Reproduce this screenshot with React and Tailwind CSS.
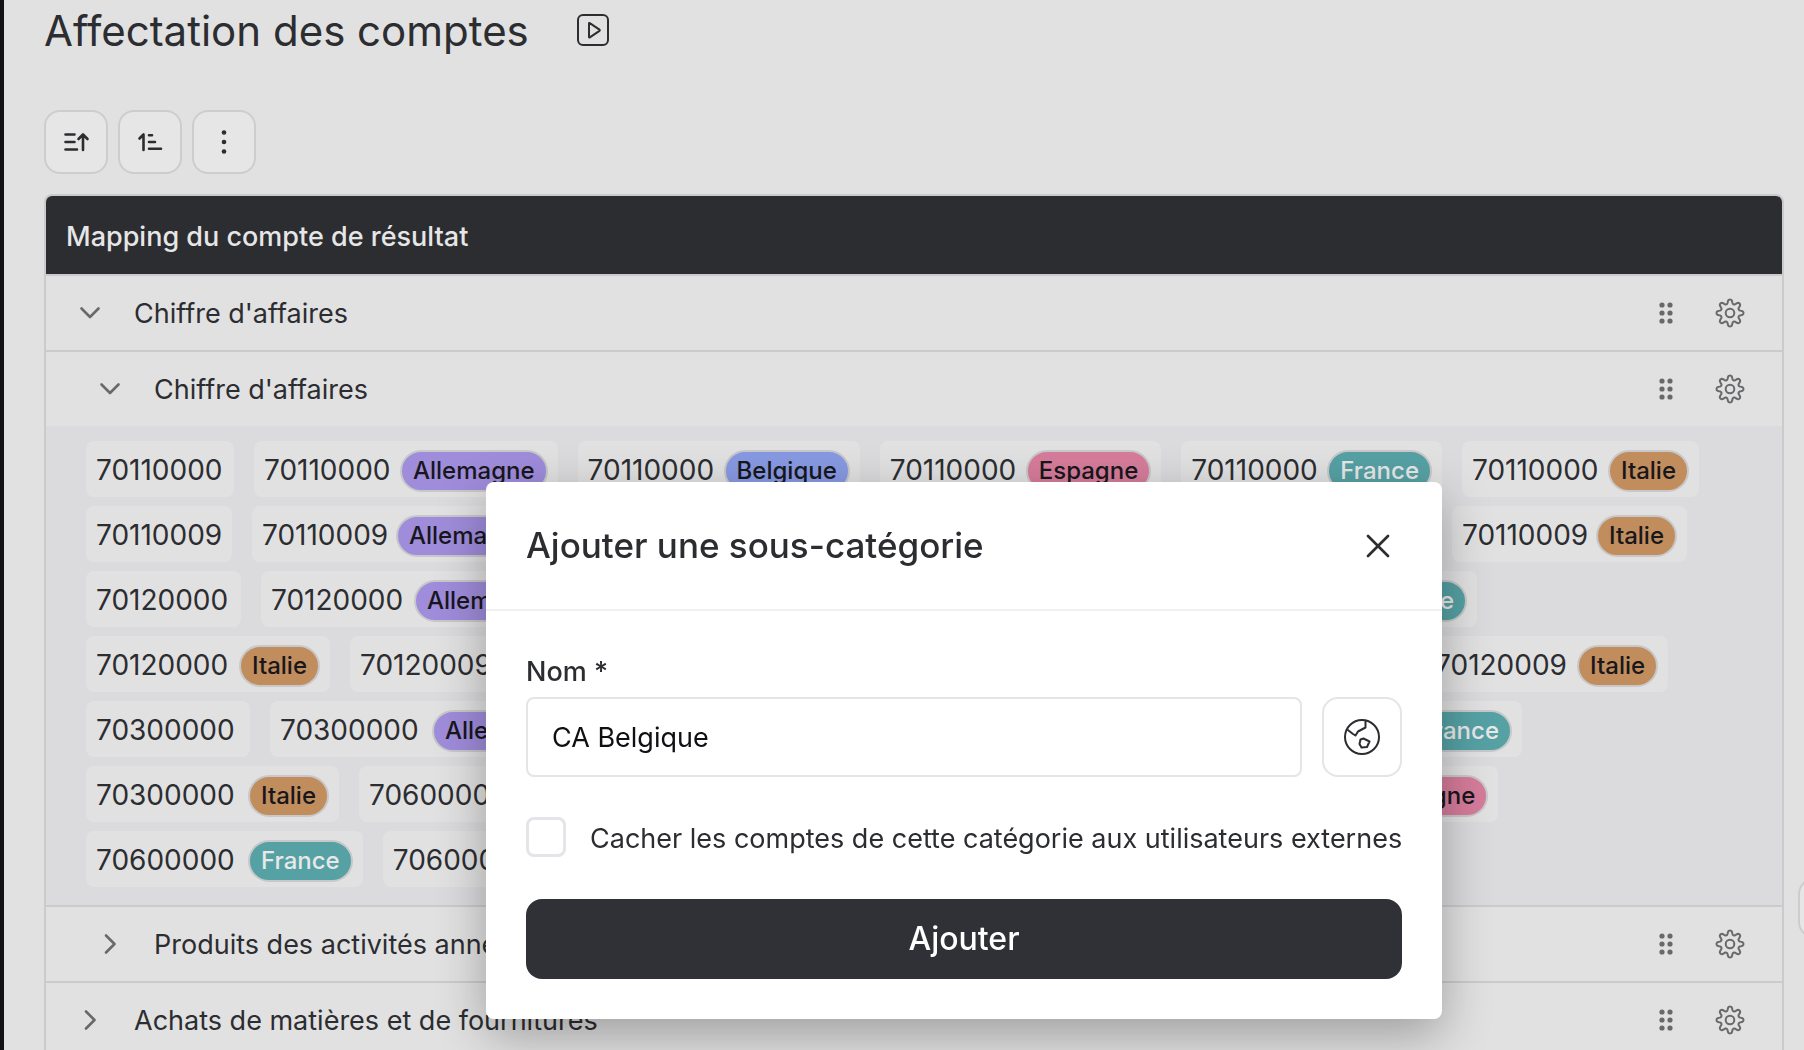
import { useState } from "react";
import clsx from "clsx";
import { X } from "lucide-react";

const TAGS = {
  Allemagne: "bg-[#9f8cdb] text-[#17171c]",
  Belgique: "bg-[#8799e2] text-[#17171c]",
  Espagne: "bg-[#d67c9b] text-[#17171c]",
  France: "bg-[#56a1a4] text-[#e8e8e8]",
  Italie: "bg-[#c28d5d] text-[#17171c]",
};

const CODE_WIDTHS = {
  70110000: "w-[128px]",
  70110009: "w-[126px]",
  70120000: "w-[135px]",
  70120009: "w-[134px]",
  70300000: "w-[144px]",
  70600000: "w-[144px]",
};

const ACCOUNT_ROWS = [
  [["70110000"], ["70110000", "Allemagne"], ["70110000", "Belgique"], ["70110000", "Espagne"], ["70110000", "France"], ["70110000", "Italie"]],
  [["70110009"], ["70110009", "Allemagne"], ["70110009", "Belgique"], ["70110009", "Espagne"], ["70110009", "France"], ["70110009", "Italie"]],
  [["70120000"], ["70120000", "Allemagne"], ["70120000", "Belgique"], ["70120000", "Espagne"], ["70120000", "France"]],
  [["70120000", "Italie"], ["70120009"], ["70120009", "Allemagne"], ["70120009", "Espagne"], ["70120000", "Italie"], ["70120009", "Italie"]],
  [["70300000"], ["70300000", "Allemagne"], ["70300000", "Belgique"], ["70300000", "Espagne"], ["70300000", "France"]],
  [["70300000", "Italie"], ["70600000"], ["70600000", "Allemagne"], ["70600000", "Belgique"], ["70600000", "Espagne"]],
  [["70600000", "France"], ["70600000", "Italie"]],
];

// eight rounded teeth around the centre of a 32px box
const GEAR_PATH =
  Array.from({ length: 144 }, (_, i) => {
    const a = (i / 144) * Math.PI * 2;
    const r = 11.4 + 2.3 * Math.tanh(1.4 * Math.cos(8 * a));
    return `${i ? "L" : "M"}${(16 + r * Math.cos(a)).toFixed(2)} ${(16 + r * Math.sin(a)).toFixed(2)}`;
  }).join("") + "Z";

function GearIcon() {
  return (
    <svg className="size-8" viewBox="0 0 32 32" fill="none" stroke="currentColor" strokeWidth="2" strokeLinejoin="round">
      <path d={GEAR_PATH} />
      <circle cx="16" cy="16" r="4.3" />
    </svg>
  );
}

function DragIcon() {
  return (
    <svg className="size-8" viewBox="0 0 32 32" fill="currentColor">
      {[8, 16, 24].map((y) => (
        <g key={y}>
          <circle cx="12" cy={y} r="2.6" />
          <circle cx="20" cy={y} r="2.6" />
        </g>
      ))}
    </svg>
  );
}

function Chevron({ open }) {
  return (
    <svg className="size-6" viewBox="0 0 24 24" fill="none" stroke="currentColor" strokeWidth="2.6" strokeLinecap="round" strokeLinejoin="round">
      <path d={open ? "M3.5 7.5l8.5 8.5L20.5 7.5" : "M8 3.5l8.5 8.5L8 20.5"} />
    </svg>
  );
}

function PlayIcon() {
  return (
    <svg className="size-8" viewBox="0 0 32 32" fill="none" stroke="currentColor" strokeWidth="2" strokeLinejoin="round">
      <rect x="1" y="1" width="30" height="30" rx="5" />
      <path d="M12 9.500v13.500c0 .5.400.7.800.400l9.700-6.600c.4-.3.400-.8 0-1.100l-9.700-6.600c-.4-.3-.8-.1-.8.400z" />
    </svg>
  );
}

function SortUpIcon() {
  return (
    <svg className="size-8" viewBox="0 0 32 32" fill="none" stroke="currentColor" strokeWidth="2.6" strokeLinecap="round" strokeLinejoin="round">
      <path d="M5.500 8.500h9M5.500 16h9M5.500 23.500h11.500M23 24V9M18.500 13L23 8.500l4.500 4.500" />
    </svg>
  );
}

function SortNumberIcon() {
  return (
    <svg className="size-8" viewBox="0 0 32 32" fill="none" stroke="currentColor" strokeWidth="2.6" strokeLinecap="round" strokeLinejoin="round">
      <path d="M5.500 12.500L9.500 8.500V24M15 9.200h3M15 16h6M15 22.700h12" />
    </svg>
  );
}

function MoreIcon() {
  return (
    <svg className="size-8" viewBox="0 0 32 32" fill="currentColor">
      <circle cx="16" cy="6.5" r="2.3" />
      <circle cx="16" cy="16" r="2.3" />
      <circle cx="16" cy="25.5" r="2.3" />
    </svg>
  );
}

function GlobeIcon() {
  return (
    <svg className="size-10" viewBox="0 0 40 40" fill="none" stroke="currentColor" strokeWidth="2" strokeLinejoin="round">
      <circle cx="20" cy="20" r="17" />
      <path d="M5.500 12.800l5.500 4.200 2.500 1.500 2.500-4 7.500-4V3.500" />
      <path d="M18.500 22.500l3-1 6 3-2.500 5.500-5.500.5-2-3.500z" />
    </svg>
  );
}

function ToolButton({ label, children }) {
  return (
    <button type="button" aria-label={label} className="flex size-16 items-center justify-center rounded-2xl border-2 border-[#cdcdce] bg-[#e6e6e6]">
      {children}
    </button>
  );
}

function Account({ code, tag }) {
  return (
    <li className="flex h-14 shrink-0 items-center gap-2 rounded-lg bg-[#e1e1e1] px-[10px] pt-[2px]">
      <span className={clsx("text-[28px]", CODE_WIDTHS[code])}>{code}</span>
      {tag && (
        <span className={clsx("mt-[2px] flex h-[42px] items-center rounded-full border-2 border-[#c8c8ca] px-[11px] text-2xl font-medium", TAGS[tag])}>
          {tag}
        </span>
      )}
    </li>
  );
}

function CategoryRow({ label, open, nested, first }) {
  return (
    <div className={clsx("flex items-center border-[#cbcbcd] pr-9", nested ? "pl-[52px]" : "pl-8", first ? "h-[74px]" : "h-[76px] border-t-2")}>
      <button type="button" aria-label={label} aria-expanded={!!open} className="text-[#68696b]">
        <Chevron open={open} />
      </button>
      <span className="ml-8 flex-1 whitespace-nowrap pt-[2px] text-[27px]">{label}</span>
      <div className="flex gap-8 text-[#68696b]">
        <button type="button" aria-label="Déplacer"><DragIcon /></button>
        <button type="button" aria-label="Paramètres"><GearIcon /></button>
      </div>
    </div>
  );
}

function AddCategoryModal() {
  const [name, setName] = useState("CA Belgique");
  const [hidden, setHidden] = useState(false);

  return (
    <div className="fixed inset-0 flex items-start justify-center pt-[482px] pl-[124px]">
      <div role="dialog" aria-labelledby="modal-title" className="w-[956px] rounded-lg bg-white shadow-[0_16px_50px_rgba(0,0,0,0.3)]">
        <div className="flex h-[129px] items-center justify-between border-b-2 border-[#f1f1f2] px-10">
          <h2 id="modal-title" className="text-[35px] font-medium">Ajouter une sous-catégorie</h2>
          <button type="button" aria-label="Fermer" className="flex size-12 items-center justify-center">
            <X className="size-10" strokeWidth={1.6} />
          </button>
        </div>
        <form className="px-10 pt-10 pb-10" onSubmit={(e) => e.preventDefault()}>
          <label htmlFor="name" className="block h-[46px] text-[27px] leading-[42px] font-medium">Nom *</label>
          <div className="flex gap-5">
            <input
              id="name"
              value={name}
              onChange={(e) => setName(e.target.value)}
              className="h-20 min-w-0 flex-1 rounded-lg border-2 border-[#e4e4e9] px-6 text-[27px] text-[#101014] outline-none"
            />
            <button type="button" aria-label="Traductions" className="flex size-20 items-center justify-center rounded-2xl border-2 border-[#e4e4e9]">
              <GlobeIcon />
            </button>
          </div>
          <div className="mt-10 flex h-10 items-center gap-6">
            <input
              id="hide-accounts"
              type="checkbox"
              checked={hidden}
              onChange={(e) => setHidden(e.target.checked)}
              className="size-10 shrink-0 appearance-none rounded-lg border-3 border-[#e4e4e9] checked:bg-[#303136]"
            />
            <label htmlFor="hide-accounts" className="pt-1 text-[27px] whitespace-nowrap">
              Cacher les comptes de cette catégorie aux utilisateurs externes
            </label>
          </div>
          <button type="submit" className="mt-[42px] h-20 w-full rounded-2xl bg-[#303136] text-[32px] font-medium text-white">
            Ajouter
          </button>
        </form>
      </div>
    </div>
  );
}

export default function App() {
  return (
    <div className="relative h-screen overflow-hidden border-l-4 border-[#131217] bg-[#e1e1e1] font-[Inter,sans-serif] text-[#2c2d31]">
      <main className="pr-5 pl-10">
        <div className="flex h-[110px] items-start gap-12">
          <h1 className="text-[42px] leading-[62px] whitespace-nowrap">Affectation des comptes</h1>
          <button type="button" aria-label="Voir la vidéo" className="mt-[14px]"><PlayIcon /></button>
        </div>

        <div className="flex gap-[10px]">
          <ToolButton label="Trier"><SortUpIcon /></ToolButton>
          <ToolButton label="Numéroter"><SortNumberIcon /></ToolButton>
          <ToolButton label="Plus d'options"><MoreIcon /></ToolButton>
        </div>

        <section className="mt-5 overflow-hidden rounded-t-lg border-2 border-[#cbcbcd]">
          <h2 className="flex h-20 items-center border-b-2 border-[#cbcbcd] bg-[#2c2d31] px-5 pt-1 text-[27px] font-medium text-[#e6e6e6]">
            Mapping du compte de résultat
          </h2>
          <CategoryRow first label="Chiffre d'affaires" open />
          <CategoryRow nested label="Chiffre d'affaires" open />
          <div className="flex flex-col gap-[9px] bg-[#dbdbde] pt-[15px] pb-[18px] pl-10">
            {ACCOUNT_ROWS.map((row, i) => (
              <ul key={i} className="flex gap-5">
                {row.map(([code, tag], j) => (
                  <Account key={j} code={code} tag={tag} />
                ))}
              </ul>
            ))}
          </div>
          <CategoryRow nested label="Produits des activités annexes" />
          <CategoryRow label="Achats de matières et de fournitures" />
        </section>
      </main>

      <button type="button" aria-label="Ouvrir l'aide" className="absolute top-[878px] -right-[54px] h-[60px] w-[60px] rounded-2xl border-2 border-[#cdcdce] bg-[#e6e6e6]" />

      <AddCategoryModal />
    </div>
  );
}
